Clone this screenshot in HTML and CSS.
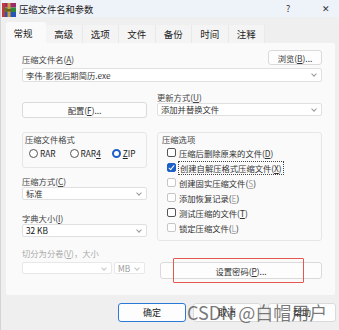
FILE: index.html
```html
<!DOCTYPE html>
<html lang="zh-CN">

<head>
    <meta charset="UTF-8">
    <title>压缩文件名和参数</title>
    <link rel="stylesheet" href="styles.css">
</head>

<body>
    <div class="window">
        <div class="titlebar">
            <svg class="app-icon" width="14" height="14" viewBox="0 0 14 14">
                <rect x="0" y="0" width="14" height="4.5" fill="#9b2a6e" />
                <rect x="0" y="4.5" width="14" height="4.5" fill="#2d8a3a" />
                <rect x="0" y="9" width="14" height="5" fill="#2a55b8" />
                <rect x="0" y="0" width="3" height="14" fill="#c23a3a" />
                <rect x="5.5" y="0" width="3" height="14" fill="#c9a040" />
                <rect x="4.5" y="6" width="5" height="2.5" fill="#7a5a20" />
            </svg>
            <span class="title">压缩文件名和参数</span>
            <span class="help">?</span>
            <span class="close">✕</span>
        </div>

        <div class="tabs">
            <div class="tab active">常规</div>
            <div class="tab">高级</div>
            <div class="tab">选项</div>
            <div class="tab">文件</div>
            <div class="tab">备份</div>
            <div class="tab">时间</div>
            <div class="tab">注释</div>
        </div>

        <div class="panel">
            <div class="top-row">
                <span class="label">压缩文件名(<u>A</u>)</span>
                <button class="btn browse">浏览(<u>B</u>)...</button>
            </div>
            <div class="combo file-combo">李伟-影视后期简历.exe</div>

            <div class="cols">
                <div class="col-left">
                    <button class="btn config">配置(<u>F</u>)...</button>

                    <div class="group format-group">
                        <div class="group-title">压缩文件格式</div>
                        <div class="radios">
                            <span class="radio-item"><i class="radio"></i>RAR</span>
                            <span class="radio-item rar4"><i class="radio"></i>RAR<u>4</u></span>
                            <span class="radio-item zip"><i class="radio on"></i><u>Z</u>IP</span>
                        </div>
                    </div>

                    <div class="label field-label">压缩方式(<u>C</u>)</div>
                    <div class="combo">标准</div>

                    <div class="label field-label dict">字典大小(<u>I</u>)</div>
                    <div class="combo strong">32 KB</div>

                    <div class="label field-label split disabled">切分为分卷(<u>V</u>)，大小</div>
                    <div class="split-row">
                        <div class="combo small off size"></div>
                        <div class="combo small off unit">MB</div>
                    </div>
                </div>

                <div class="col-right">
                    <div class="label update-label">更新方式(<u>U</u>)</div>
                    <div class="combo">添加并替换文件</div>

                    <div class="group options-group">
                        <div class="group-title">压缩选项</div>
                        <div class="check-row"><i class="check"></i>压缩后删除原来的文件(<u>D</u>)</div>
                        <div class="check-row"><i class="check on"></i><span class="focus">创建自解压格式压缩文件(<u>X</u>)</span></div>
                        <div class="check-row disabled"><i class="check"></i>创建固实压缩文件(<u>S</u>)</div>
                        <div class="check-row disabled"><i class="check"></i>添加恢复记录(<u>E</u>)</div>
                        <div class="check-row"><i class="check"></i>测试压缩的文件(<u>T</u>)</div>
                        <div class="check-row disabled"><i class="check"></i>锁定压缩文件(<u>L</u>)</div>
                    </div>

                    <div class="password-wrap">
                        <button class="btn password">设置密码(<u>P</u>)...</button>
                        <span class="mark"></span>
                    </div>
                </div>
            </div>
        </div>

        <div class="footer">
            <button class="btn footer-btn default">确定</button>
            <button class="btn footer-btn">取消</button>
            <button class="btn footer-btn">帮助</button>
        </div>

        <div class="watermark">CSDN @白帽用户</div>
    </div>
</body>

</html>
```

FILE: styles.css
```css
* {
    box-sizing: border-box;
    font-family: "Noto Sans CJK SC", "Noto Sans", sans-serif;
}

body {
    margin: 0;
    background-color: #f0f0f0;
}

.window {
    position: relative;
    width: 339px;
    height: 330px;
    background-color: #efefef;
    border-left: 1px solid #d4d4d4;
    overflow: hidden;
}

u {
    text-decoration: underline;
    text-underline-offset: 1px;
}

/* title bar */

.titlebar {
    height: 17px;
    display: flex;
    align-items: center;
    background-color: #eef2f9;
    padding-left: 1px;
}

.app-icon {
    flex: none;
    margin-top: 2px;
}

.title {
    margin-left: 3px;
    font-size: 9.3px;
    color: #1a1a1a;
    flex: 1;
}

.help {
    font-size: 9px;
    color: #333;
    width: 36px;
}

.close {
    font-size: 9px;
    color: #333;
    width: 17px;
}

/* tabs */

.tabs {
    display: flex;
    align-items: flex-end;
    height: 26px;
    padding-left: 5px;
    padding-top: 5px;
}

.tab {
    height: 18px;
    width: 36.5px;
    line-height: 18px;
    font-size: 9.5px;
    color: #222;
    text-align: center;
    background-color: #f4f4f4;
    border-right: 1px solid #e9e9e9;
}

.tab.active {
    height: 21px;
    width: 40px;
    line-height: 22px;
    background-color: #fafafa;
    border-right: none;
    border-radius: 2px 2px 0 0;
    padding-right: 6px;
}

/* panel */

.panel {
    margin-left: 5px;
    width: 329px;
    height: 252px;
    background-color: #fafafa;
    border-radius: 0 2px 2px 2px;
    padding: 7px 13px 0 16px;
}

.label {
    font-size: 8.3px;
    line-height: 12px;
    color: #444;
}

.disabled,
.disabled u {
    color: #aaa;
}

.top-row {
    display: flex;
    justify-content: space-between;
    align-items: flex-end;
    height: 15px;
}

.btn {
    display: block;
    margin: 0;
    padding: 0;
    background-color: #fdfdfd;
    border: 1px solid #dadada;
    border-radius: 3px;
    font-size: 8.3px;
    color: #333;
    text-align: center;
}

.browse {
    width: 54px;
    height: 15px;
}

.combo {
    position: relative;
    height: 13px;
    line-height: 11px;
    background-color: #fff;
    border: 1px solid #e0e0e0;
    border-radius: 2px;
    font-size: 8.3px;
    color: #333;
    padding-left: 3px;
}

.combo::after {
    content: "";
    position: absolute;
    right: 5px;
    top: 3px;
    width: 3px;
    height: 3px;
    border-right: 1px solid #999;
    border-bottom: 1px solid #999;
    transform: rotate(45deg);
}

.file-combo {
    margin-top: 3px;
    height: 14px;
    line-height: 12px;
    color: #3a3a3a;
}

.strong {
    color: #111;
}

.cols {
    display: flex;
    gap: 10px;
    margin-top: 8px;
}

.col-left {
    width: 125px;
}

.col-right {
    width: 165px;
}

/* left column */

.config {
    width: 125px;
    height: 16px;
    margin-top: 12px;
}

.group {
    border: 1px solid #e6e6e6;
    border-radius: 3px;
}

.group-title {
    font-size: 8.3px;
    line-height: 12px;
    color: #444;
}

.format-group {
    margin-top: 14px;
    height: 36px;
    padding-left: 2px;
}

.radios {
    display: flex;
    align-items: center;
    height: 14px;
    margin-top: 1px;
    padding-left: 4px;
}

.radio-item {
    display: flex;
    align-items: center;
    font-size: 8.3px;
    color: #222;
}

.rar4 {
    margin-left: 14px;
}

.zip {
    margin-left: 11px;
}

.radio {
    display: inline-block;
    width: 9px;
    height: 9px;
    margin-right: 2px;
    border: 1px solid #555;
    border-radius: 50%;
    background-color: #fff;
}

.radio.on {
    border: 2.5px solid #1d5fc8;
    background-color: #fff;
}

.field-label {
    margin-top: 7px;
}

.dict {
    margin-top: 12px;
}

.split {
    margin-top: 10px;
}

.split-row {
    display: flex;
    gap: 2px;
    margin-top: 3px;
}

.combo.small {
    height: 12px;
    line-height: 10px;
}

.combo.off {
    border-color: #e8e8e8;
    color: #999;
}

.combo.off::after {
    border-color: #c4c4c4;
}

.size {
    width: 90px;
}

.unit {
    width: 31px;
}

/* right column */

.update-label {
    margin-top: 1px;
}

.options-group {
    margin-top: 16px;
    height: 109px;
    padding-left: 4px;
}

.check-row {
    display: flex;
    align-items: center;
    height: 15px;
    font-size: 8.3px;
    color: #333;
    padding-left: 5px;
}

.check {
    display: inline-block;
    flex: none;
    width: 9px;
    height: 9px;
    margin-right: 3px;
    border: 1px solid #555;
    border-radius: 2px;
    background-color: #fff;
    position: relative;
}

.check-row.disabled .check {
    border-color: #c6c6c6;
}

.check.on {
    border-color: #1d5fc8;
    background-color: #1d5fc8;
}

.check.on::after {
    content: "";
    position: absolute;
    left: 2px;
    top: 0;
    width: 2px;
    height: 5px;
    border-right: 1px solid #fff;
    border-bottom: 1px solid #fff;
    transform: rotate(40deg);
}

.focus {
    outline: 1px dotted #444;
    padding: 0 1px;
    line-height: 12px;
}

.password-wrap {
    position: relative;
    margin-top: 21px;
    margin-left: 3px;
}

.password {
    width: 162px;
    height: 17px;
}

.mark {
    position: absolute;
    left: 13px;
    top: -4px;
    width: 131px;
    height: 25px;
    border: 1.5px solid #e5564d;
    border-radius: 1px;
}

/* footer */

.footer {
    display: flex;
    justify-content: flex-end;
    gap: 7px;
    padding-top: 8px;
    padding-right: 3px;
}

.footer-btn {
    width: 68px;
    height: 19px;
    font-size: 9px;
    color: #222;
}

.footer-btn.default {
    border-color: #2b79d6;
}

.watermark {
    position: absolute;
    left: 186px;
    top: 299px;
    font-size: 18px;
    color: rgba(70, 70, 70, 0.72);
    white-space: nowrap;
}
```
